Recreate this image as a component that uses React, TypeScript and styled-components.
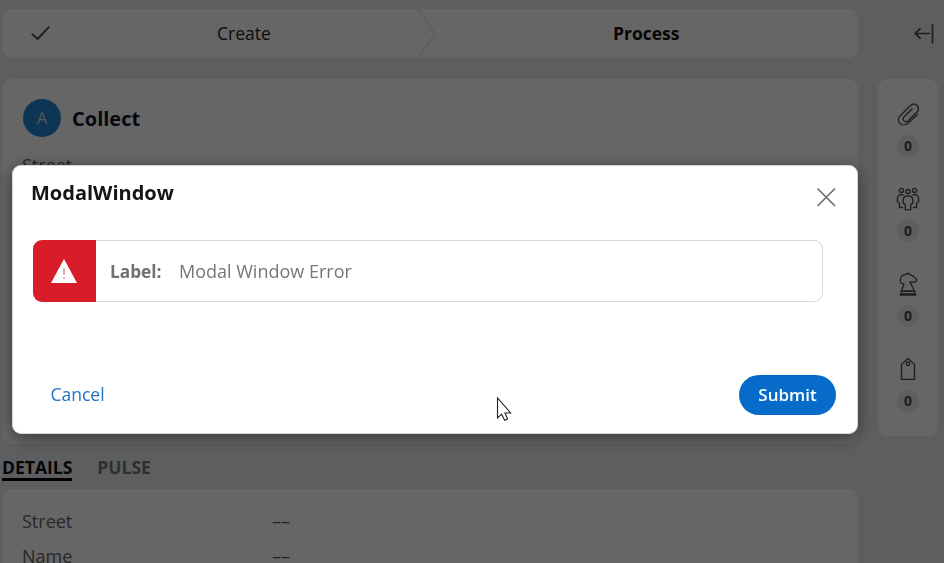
import React from "react";
import styled, { createGlobalStyle } from "styled-components";

const GlobalStyle = createGlobalStyle`
  * { box-sizing: border-box; }
  body {
    margin: 0;
    overflow: hidden;
    background: #e8ecf1;
    font-family: "Open Sans", "Noto Sans", sans-serif;
    color: #000;
  }
`;

const Page = styled.div`
  display: flex;
  width: 944px;
  height: 563px;
  overflow: hidden;
  background: #e8ecf1;
`;

const Main = styled.main`
  width: 858px;
  flex: none;
  padding: 9px 0 0 2px;
  display: flex;
  flex-direction: column;
`;

const Card = styled.section`
  flex: none;
  background: #fff;
  border-radius: 10px;
`;

const Stages = styled(Card)`
  height: 49px;
  display: flex;
  align-items: stretch;
`;

const Stage = styled.div<{ $active?: boolean }>`
  width: ${(p) => (p.$active ? 421 : 415)}px;
  display: flex;
  align-items: center;
  font-size: 17.5px;
  font-weight: ${(p) => (p.$active ? 700 : 400)};
  color: ${(p) => (p.$active ? "#111" : "#222")};
  white-space: nowrap;
`;

const StageLabel = styled.span<{ $start: number }>`
  padding: 0 0 2px ${(p) => p.$start}px;
`;

const CheckIcon = styled.svg`
  flex: none;
  margin-left: 28px;
`;

const CaseCard = styled(Card)`
  height: 365px;
  margin-top: 21px;
  padding: 19px 20px;
`;

const CaseHeader = styled.header`
  display: flex;
  align-items: center;
  gap: 11px;
  height: 39px;
`;

const Avatar = styled.div`
  width: 38px;
  height: 38px;
  margin-left: 1px;
  border-radius: 50%;
  background: #1f87d0;
  color: #ddd;
  font-size: 16px;
  line-height: 38px;
  text-align: center;
`;

const CaseTitle = styled.h1`
  margin: 0;
  padding-top: 2px;
  font-size: 20px;
  line-height: 26px;
  font-weight: 700;
  color: #12122c;
`;

const FieldLabel = styled.span`
  width: 250px;
  color: #666;
`;

const FieldRow = styled.div<{ $top?: number }>`
  display: flex;
  margin-top: ${(p) => p.$top || 0}px;
  height: 35px;
  font-size: 18px;
  line-height: 24px;
  color: #555;
`;

const Tabs = styled.nav`
  flex: none;
  height: 45px;
  padding-top: 14px;
  display: flex;
  align-items: flex-start;
  gap: 25px;
  font-size: 17.5px;
`;

const Tab = styled.div<{ $active?: boolean }>`
  height: 23px;
  line-height: 19px;
  font-weight: 700;
  color: ${(p) => (p.$active ? "#111" : "#777")};
  border-bottom: ${(p) => (p.$active ? "3px solid #000" : "0")};
`;

const Details = styled(Card)`
  height: 120px;
  padding: 20px;
`;

const Side = styled.aside`
  width: 86px;
  padding: 23px 6px 0 20px;
`;

const CollapseIcon = styled.svg`
  display: block;
  margin-left: 36px;
`;

const Utilities = styled(Card)`
  width: 60px;
  height: 357px;
  margin-top: 34px;
  padding-top: 22px;
`;

const Utility = styled.div`
  height: 85px;
  display: flex;
  flex-direction: column;
  align-items: center;
  gap: 8px;
`;

const Count = styled.span`
  width: 22px;
  height: 22px;
  border-radius: 50%;
  background: #e8ecf1;
  color: #484848;
  font-size: 14px;
  font-weight: 700;
  line-height: 21px;
  text-align: center;
`;

const Overlay = styled.div`
  position: fixed;
  inset: 0;
  padding: 165px 86px 130px 12px;
  background: rgba(0, 0, 0, 0.6);
`;

const Dialog = styled.div`
  width: 846px;
  height: 269px;
  padding: 13px 21px 18px 18px;
  border-radius: 9px;
  background: #fff;
  border: 1px solid #d5d5d5;
  box-shadow: 0 4px 18px rgba(0, 0, 0, 0.45);
  display: flex;
  flex-direction: column;
`;

const DialogHeader = styled.header`
  display: flex;
  justify-content: space-between;
  height: 61px;
`;

const DialogTitle = styled.h2`
  margin: 0;
  font-size: 20px;
  line-height: 27px;
  font-weight: 700;
  color: #151515;
`;

const CloseIcon = styled.svg`
  margin-top: 8px;
`;

const ErrorBanner = styled.div`
  width: 790px;
  height: 62px;
  margin-left: 2px;
  display: flex;
  align-items: center;
  border: 1px solid #d8d8d8;
  border-radius: 9px;
  font-size: 18px;
  color: #767676;
`;

const ErrorBadge = styled.div`
  width: 63px;
  height: 62px;
  margin: -1px 14px -1px -1px;
  padding-right: 1px;
  display: flex;
  align-items: center;
  justify-content: center;
  border-radius: 9px 0 0 9px;
  background: #d91c29;
`;

const ErrorName = styled.strong`
  width: 69px;
  font-size: 17.25px;
  font-weight: 700;
  color: #707070;
`;

const Actions = styled.footer`
  margin-top: auto;
  display: flex;
  align-items: center;
  justify-content: space-between;
`;

const Button = styled.button<{ $primary?: boolean }>`
  width: ${(p) => (p.$primary ? 97 : 93)}px;
  height: 40px;
  padding: 0 0 2px;
  border: 0;
  border-radius: 20px;
  background: ${(p) => (p.$primary ? "#076bc9" : "transparent")};
  color: ${(p) => (p.$primary ? "#fff" : "#2472c4")};
  font: ${(p) => (p.$primary ? "600 17px" : "400 17.5px")} "Open Sans", sans-serif;
`;

const Pointer = styled.svg`
  position: absolute;
  left: 496px;
  top: 396px;
`;

const line = {
  fill: "none",
  stroke: "#4c4c4c",
  strokeWidth: 1.35,
  strokeLinejoin: "round" as const,
  strokeLinecap: "round" as const,
};

const utilityIcons = [
  {
    name: "Attachments",
    art: (
      <path d="M21.5 12.5 12.2 21C6.2 26.5-1.2 19 4.2 13.7L14.2 3.8C19-.7 25.4 5.4 21 10L12.2 18.7C9.2 21.5 5.3 17.7 8.1 14.8L16 7" />
    ),
  },
  {
    name: "Followers",
    art: (
      <>
        <circle cx="5.4" cy="3.4" r="2" />
        <circle cx="12" cy="4.6" r="2.1" />
        <circle cx="18.6" cy="3.4" r="2" />
        <path d="M7.2 8C4.6 6.8 1.4 8.2 1.4 11.5V14.5L3.4 16.2V20.5H6.5M16.8 8C19.4 6.8 22.6 8.2 22.6 11.5V14.5L20.6 16.2V20.5H17.5" />
        <path d="M12 8.8C8.8 8.8 7.2 10.2 7.2 13V16L9.3 17.5V22.8H14.7V17.5L16.8 16V13C16.8 10.2 15.2 8.8 12 8.8Z" />
      </>
    ),
  },
  {
    name: "Stakeholders",
    art: (
      <>
        <path d="M6 19.2C5 16.8 8.3 14.4 7.8 11.8C6 12.2 4.3 10.7 4.3 8.2C4.4 4.6 7 2.3 10.8 2.2L12.2 1L13.4 2.7C16.2 3 18.7 5.1 20.8 7.8L19.3 10.1L14 9.9C14.2 12.7 18.4 15.3 17.8 19.2Z" />
        <path d="M5 19.2H19V22H5ZM4 23H20" />
      </>
    ),
  },
  {
    name: "Tags",
    art: (
      <>
        <path d="M5.5 7.2 12 1.6 18.5 7.2V22.4H5.5Z" />
        <circle cx="12" cy="6.8" r="1.8" />
      </>
    ),
  },
];

export default function App() {
  return (
    <>
      <GlobalStyle />
      <Page>
        <Main>
          <Stages>
            <Stage>
              <CheckIcon width="21" height="18" viewBox="0 0 21 18">
                <path d="M1.8 8.8 7.6 14 19.2 1.6" fill="none" stroke="#555" strokeWidth="2" />
              </CheckIcon>
              <StageLabel $start={166}>Create</StageLabel>
            </Stage>
            <svg width="20" height="49" viewBox="0 0 20 49">
              <path d="M1 0 18 24.5 1 49" fill="none" stroke="#e2e2e2" strokeWidth="1.2" />
            </svg>
            <Stage $active>
              <StageLabel $start={176}>Process</StageLabel>
            </Stage>
          </Stages>
          <CaseCard>
            <CaseHeader>
              <Avatar>A</Avatar>
              <CaseTitle>Collect</CaseTitle>
            </CaseHeader>
            <FieldRow $top={16}>
              <FieldLabel>Street</FieldLabel>
            </FieldRow>
          </CaseCard>
          <Tabs>
            <Tab $active>DETAILS</Tab>
            <Tab>PULSE</Tab>
          </Tabs>
          <Details>
            <FieldRow>
              <FieldLabel>Street</FieldLabel>––
            </FieldRow>
            <FieldRow>
              <FieldLabel>Name</FieldLabel>––
            </FieldRow>
          </Details>
        </Main>
        <Side>
          <CollapseIcon width="22" height="22" viewBox="0 0 22 22">
            <path d="M1.5 10.5H16M6.5 5.3 1.3 10.5 6.5 15.7M18.5 1V20.5" fill="none" stroke="#4c4c4c" strokeWidth="1.7" />
          </CollapseIcon>
          <Utilities>
            {utilityIcons.map(({ name, art }) => (
              <Utility key={name}>
                <svg width="26" height="26" viewBox="-1 -1 26 26" aria-label={name} {...line}>
                  {art}
                </svg>
                <Count>0</Count>
              </Utility>
            ))}
          </Utilities>
        </Side>
      </Page>
      <Overlay>
        <Dialog role="dialog" aria-label="ModalWindow">
          <DialogHeader>
            <DialogTitle>ModalWindow</DialogTitle>
            <CloseIcon width="20" height="20" viewBox="0 0 20 20">
              <path d="M1.5 1.5 19 19M19 1.5 1.5 19" stroke="#707070" strokeWidth="1.7" />
            </CloseIcon>
          </DialogHeader>
          <ErrorBanner>
            <ErrorBadge>
              <svg width="26" height="24" viewBox="0 0 26 24">
                <path d="M13 0 26 24H0Z" fill="#fff" />
                <path d="M13 9V16M13 18V20" stroke="#e9a9ad" strokeWidth="2" />
              </svg>
            </ErrorBadge>
            <ErrorName>Label:</ErrorName>
            <span>Modal Window Error</span>
          </ErrorBanner>
          <Actions>
            <Button>Cancel</Button>
            <Button $primary>Submit</Button>
          </Actions>
        </Dialog>
        <Pointer width="18" height="28" viewBox="0 0 18 28">
          <path d="M1.5 2V22L5.6 18.2 8.6 24.2 11.6 23 9 17H14.6Z" fill="#fff" stroke="#222" strokeWidth="1.1" />
        </Pointer>
      </Overlay>
    </>
  );
}
